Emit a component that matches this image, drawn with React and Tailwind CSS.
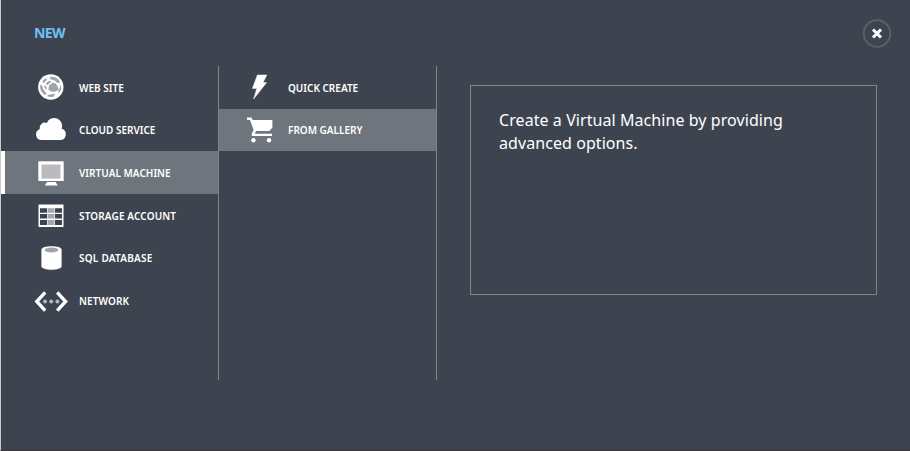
import React from "react";

const Icon = ({ children }) => (
  <svg width="40" height="42" viewBox="0 0 40 42" fill="none" className="block shrink-0">
    {children}
  </svg>
);

const Globe = () => (
  <Icon>
    <circle cx="20.8" cy="21" r="12.7" fill="#fff" />
    <g fill="#a0a4a9">
      <path d="M19 19.6 L22.6 16.8 Q25.4 16.6 26.8 19 L29 23.4 L25.2 25.8 L21 25.4 L18.4 23.4 Z" />
      <path d="M19.6 11 Q25 9.8 28.8 13.8 L30 16.4 L27.4 17 Q25 13.8 20.6 13.4 Z" />
      <path d="M12.6 14.8 L15.6 12.2 L17 13.6 L14.6 16.6 L12.6 17 Z" />
      <path d="M10.2 18.6 L12.2 19.4 Q12.6 23.6 16.6 27.2 L15.2 29.2 Q9.2 25.4 10.2 18.6 Z" />
      <path d="M17.6 28.6 Q21 28.8 24.8 27.6 L24 30.4 Q20.4 31.6 17.6 30.6 Z" />
      <path d="M30.2 18.6 Q32 21.6 30.6 24.8 L28.8 27 L28 26.2 Q30.6 22.6 30.2 18.6 Z" />
      <path d="M18.6 14.8 L21.4 15.4 L17.2 19.2 L15.6 17.8 Z" />
      <path d="M14 19.6 L16.6 20.6 L16.4 24 Q14.2 22 14 19.6 Z" />
    </g>
  </Icon>
);

const Cloud = () => (
  <Icon>
    <path
      d="M11.6 31 A5.6 5.6 0 0 1 9.6 20.2 A5.4 5.4 0 0 1 16.8 14 A7.4 7.4 0 0 1 31.6 19.8 A5.7 5.7 0 0 1 30.2 31 Z"
      fill="#fff"
    />
  </Icon>
);

const Monitor = () => (
  <Icon>
    <path d="M8.3 10.3 H33.7 V30 H8.3 Z" fill="#fff" />
    <path d="M11.5 13.5 H30.5 V27.6 H11.5 Z" fill="#b9bbbe" />
    <path d="M17 31 H25.5 L27.8 34.6 H14.8 Z" fill="#fff" />
  </Icon>
);

const Table = () => (
  <Icon>
    <path d="M8.5 10.5 H33.5 V33 H8.5 Z" fill="#fff" />
    <path d="M10 14.2 h7.2 v4.6 h-7.2z M25 14.2 h7 v4.6 H25z M10 20 h7.2 v4.6 h-7.2z M25 20 h7 v4.6 H25z M10 26 h7.2 v5 h-7.2z M25 26 h7 v5 H25z" fill="#3e444f" />
    <path d="M18 14.2 h6.4 v4.6 h-6.4z M18 20 h6.4 v4.6 h-6.4z M18 26 h6.4 v5 h-6.4z" fill="#a5a8ac" />
  </Icon>
);

const Database = () => (
  <Icon>
    <path d="M11.4 13.6 C11.4 9 31.6 9 31.6 13.6 V30.2 C31.6 34.8 11.4 34.8 11.4 30.2 Z" fill="#fff" />
    <ellipse cx="21.5" cy="14" rx="6.8" ry="2.5" fill="#a0a4a9" />
  </Icon>
);

const Network = () => (
  <Icon>
    <path d="M15.2 13.4 L6.8 22.5 L15.2 31.6 M27.2 13.4 L35.6 22.5 L27.2 31.6" stroke="#fff" strokeWidth="3.4" />
    <g fill="#b5b8bb">
      <circle cx="15" cy="22.5" r="2" />
      <circle cx="21.2" cy="22.5" r="2" />
      <circle cx="27.4" cy="22.5" r="2" />
    </g>
  </Icon>
);

const Bolt = () => (
  <Icon>
    <path
      d="M17.4 9 H26.8 L23 16.6 H26.6 L13.6 33 L16.8 22.4 H12.4 Z"
      fill="#fff"
      stroke="#fff"
      strokeWidth="0.5"
    />
  </Icon>
);

const Cart = () => (
  <Icon>
    <path d="M7 8.6 H11.4 L12.8 11 H32.4 V18.6 L29.4 22 H16 L14.8 24.8 H32 V27 H12.2 L11.4 25.4 L13.6 21 L10 11 H7 Z" fill="#fff" />
    <circle cx="13.4" cy="31.2" r="2.2" fill="#fff" />
    <circle cx="29" cy="31.2" r="2.2" fill="#fff" />
  </Icon>
);

const services = [
  { label: "WEB SITE", icon: Globe, tracking: "tracking-normal" },
  { label: "CLOUD SERVICE", icon: Cloud, tracking: "tracking-normal" },
  { label: "VIRTUAL MACHINE", icon: Monitor, tracking: "tracking-[0.03px]", active: true },
  { label: "STORAGE ACCOUNT", icon: Table, tracking: "tracking-[0.14px]" },
  { label: "SQL DATABASE", icon: Database, tracking: "tracking-[0.25px]" },
  { label: "NETWORK", icon: Network, tracking: "tracking-[0.08px]" },
];

const methods = [
  { label: "QUICK CREATE", icon: Bolt },
  { label: "FROM GALLERY", icon: Cart, active: true },
];

export default function App() {
  return (
    <div className="flex h-[451px] w-[910px] flex-col overflow-hidden border-b border-l border-b-[#3b373f] border-l-[#c9c9c9] bg-[#3e444f] font-['Noto_Sans','Open_Sans',sans-serif] text-white">
      <header className="flex h-[66px] shrink-0 items-center justify-between pr-[18px] pl-[33px]">
        <h1 className="text-[14px] leading-none font-bold tracking-[-0.6px] text-[#6dc2f7]">NEW</h1>
        <button aria-label="Close" className="mt-px block">
          <svg width="30" height="30" viewBox="0 0 30 30" fill="none">
            <circle cx="15" cy="14.5" r="13.3" stroke="#59606a" strokeWidth="2" />
            <path d="M11 10.5 L19 18.5 M19 10.5 L11 18.5" stroke="#fff" strokeWidth="3" />
          </svg>
        </button>
      </header>
      <main className="flex items-start">
        <nav className="h-[314px] w-[218px] border-r border-[#7f858c]">
          {services.map(({ label, icon: Glyph, tracking, active }) => (
            <div
              key={label}
              className={
                active
                  ? "flex h-[42.6px] items-start border-l-4 border-white bg-[#6e757c] pl-[25px]"
                  : "flex h-[42.6px] items-start pl-[29px]"
              }
            >
              <Glyph />
              <span className={`pt-[14.8px] pl-[9px] text-[10px] leading-[14px] font-semibold whitespace-nowrap ${tracking}`}>
                {label}
              </span>
            </div>
          ))}
        </nav>
        <nav className="h-[314px] w-[218px] border-r border-[#7f858c]">
          {methods.map(({ label, icon: Glyph, active }) => (
            <div
              key={label}
              className={
                active
                  ? "flex h-[42.6px] items-start bg-[#6e757c] pl-[21px]"
                  : "flex h-[42.6px] items-start pl-[21px]"
              }
            >
              <Glyph />
              <span className="pt-[14.8px] pl-[8px] text-[10px] leading-[14px] font-semibold whitespace-nowrap">{label}</span>
            </div>
          ))}
        </nav>
        <section className="mt-[19px] ml-[33px] h-[210px] w-[407px] border border-[#7f858c] px-[28px] pt-[23px]">
          <p className="text-[16px] leading-[23px] tracking-[0.07px]">
            Create a Virtual Machine by providing
            <br />
            advanced options.
          </p>
        </section>
      </main>
    </div>
  );
}
